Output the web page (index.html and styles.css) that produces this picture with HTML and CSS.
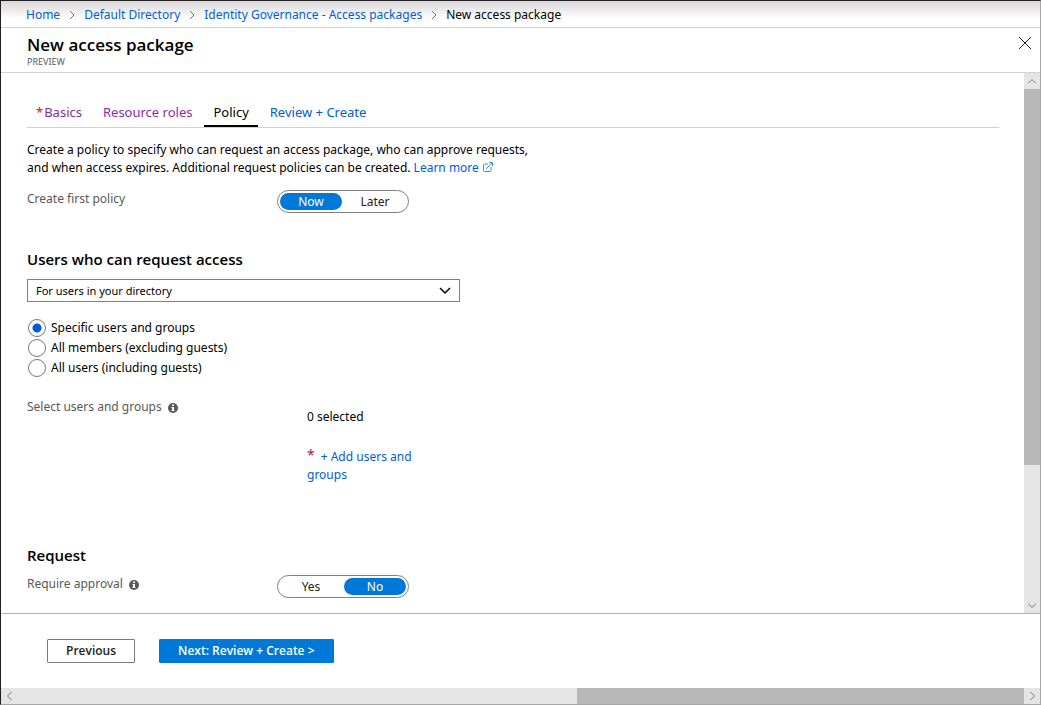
FILE: index.html
```html
<!DOCTYPE html>
<html lang="en">
<head>
<meta charset="utf-8">
<title>New access package</title>
<meta name="viewport" content="width=device-width, initial-scale=1">
<link rel="stylesheet" href="styles.css">
</head>
<body>
<div class="portal">
  <nav class="breadcrumb" aria-label="Breadcrumb">
    <a href="#">Home</a>
    <svg class="crumb-arrow" viewBox="0 0 6 10"><path d="M1 1l4 4-4 4"/></svg>
    <a href="#">Default Directory</a>
    <svg class="crumb-arrow" viewBox="0 0 6 10"><path d="M1 1l4 4-4 4"/></svg>
    <a href="#">Identity Governance - Access packages</a>
    <svg class="crumb-arrow" viewBox="0 0 6 10"><path d="M1 1l4 4-4 4"/></svg>
    <span>New access package</span>
  </nav>

  <header class="blade-header">
    <div>
      <h1 class="blade-title">New access package</h1>
      <div class="blade-tag">PREVIEW</div>
    </div>
    <button class="close" type="button" aria-label="Close">
      <svg viewBox="0 0 12 12" width="12" height="12"><path d="M0 0l12 12M12 0L0 12"/></svg>
    </button>
  </header>

  <div class="blade-body">
    <main class="content">
      <nav class="tabs" aria-label="Steps">
        <a class="tab visited" href="#"><span class="star">*</span>Basics</a>
        <a class="tab visited" href="#">Resource roles</a>
        <a class="tab active" href="#" aria-current="page">Policy</a>
        <a class="tab" href="#">Review + Create</a>
      </nav>

      <p class="intro">Create a policy to specify who can request an access package, who can approve requests,<br>and when access expires. Additional request policies can be created. <a href="#">Learn more<svg class="external" viewBox="0 0 10 10" width="10" height="10"><path d="M5 2H1.500Q.5 2 .5 3v5.500q0 1 1 1H7q1 0 1-1V5M3 7l6-6M6 .5h3.500V4"/></svg></a></p>

      <div class="row policy-row">
        <div class="label" id="first-policy">Create first policy</div>
        <div class="toggle" role="group" aria-labelledby="first-policy">
          <button class="option on" type="button" aria-pressed="true">Now</button>
          <button class="option" type="button" aria-pressed="false">Later</button>
        </div>
      </div>

      <h2 class="section-title" id="users-title">Users who can request access</h2>
      <div class="select-wrap">
        <select class="select" aria-labelledby="users-title"><option>For users in your directory</option></select>
        <svg class="select-arrow" viewBox="0 0 12 8" width="12" height="8"><path d="M1 1l5 5 5-5"/></svg>
      </div>

      <div class="radios" role="radiogroup" aria-labelledby="users-title">
        <label class="radio"><input type="radio" name="scope" checked>Specific users and groups</label>
        <label class="radio"><input type="radio" name="scope">All members (excluding guests)</label>
        <label class="radio"><input type="radio" name="scope">All users (including guests)</label>
      </div>

      <div class="row picker-row">
        <div class="label">Select users and groups<svg class="info" viewBox="0 0 10 10" width="10" height="10"><circle cx="5" cy="5" r="5"/><path d="M4 1.500h2v1.500H4zM3.500 4H6v3h.5v1h-3V7H4V5h-.5z"/></svg></div>
        <div class="picker">
          <div class="count">0 selected</div>
          <div class="add"><span class="star">*</span><a href="#">+ Add users and groups</a></div>
        </div>
      </div>

      <h2 class="section-title">Request</h2>
      <div class="row approval-row">
        <div class="label" id="approval">Require approval<svg class="info" viewBox="0 0 10 10" width="10" height="10"><circle cx="5" cy="5" r="5"/><path d="M4 1.500h2v1.500H4zM3.500 4H6v3h.5v1h-3V7H4V5h-.5z"/></svg></div>
        <div class="toggle" role="group" aria-labelledby="approval">
          <button class="option" type="button" aria-pressed="false">Yes</button>
          <button class="option on" type="button" aria-pressed="true">No</button>
        </div>
      </div>
    </main>
    <div class="scrollbar vertical" aria-hidden="true">
      <span class="scroll-end"><svg viewBox="0 0 8 5" width="8" height="5"><path d="M0 4.500l4-4 4 4"/></svg></span>
      <span class="thumb"></span>
      <span class="track"></span>
      <span class="scroll-end"><svg viewBox="0 0 8 5" width="8" height="5"><path d="M0 .5l4 4 4-4"/></svg></span>
    </div>
  </div>

  <footer class="actions">
    <button class="button" type="button">Previous</button>
    <button class="button primary" type="button">Next: Review + Create &gt;</button>
  </footer>

  <div class="scrollbar horizontal" aria-hidden="true">
    <span class="scroll-end"><svg viewBox="0 0 5 8" width="5" height="8"><path d="M4.500 0l-4 4 4 4"/></svg></span>
    <span class="track"></span>
    <span class="thumb"></span>
    <span class="scroll-end"><svg viewBox="0 0 5 8" width="5" height="8"><path d="M.5 0l4 4-4 4"/></svg></span>
  </div>
</div>
</body>
</html>
```
FILE: styles.css
```css
* { box-sizing: border-box; }

body {
  margin: 0;
  font: 12px/18px "Noto Sans", "Open Sans", sans-serif;
  color: #000;
  background: #fff;
}

a { color: #015cda; text-decoration: none; }
button { font: inherit; cursor: pointer; }
svg { fill: none; stroke: currentColor; flex: none; }

.portal {
  display: flex;
  flex-direction: column;
  height: 100vh;
  border: 1px solid #231f20;
  border-right-color: #a6a6a6;
  border-bottom-color: #a6a6a6;
}

.breadcrumb {
  display: flex;
  align-items: center;
  gap: 9px;
  flex: none;
  height: 27px;
  padding: 1px 0 0 25px;
  border-bottom: 1px solid #d2d2d2;
  background: linear-gradient(#d9d7d9, #fff 18px);
  white-space: nowrap;
}
.crumb-arrow { width: 6px; height: 10px; color: #777; }

.blade-header {
  display: flex;
  justify-content: space-between;
  align-items: flex-start;
  flex: none;
  height: 45px;
  padding: 7px 8px 0 26px;
  border-bottom: 1px solid #d2d2d2;
}
.blade-title { margin: 0; font: 600 17px/20px "Open Sans", "Noto Sans", sans-serif; }
.blade-tag { font-size: 9px; line-height: 13px; color: #595959; }
.close { display: flex; padding: 2px 1px; border: 0; background: none; color: #222; }

.blade-body { display: flex; flex: 1; min-height: 0; }
.content { flex: 1; min-width: 0; overflow: hidden; padding: 26px 25px 0 26px; }

.tabs { display: flex; gap: 3px; border-bottom: 1px solid #d2d2d2; font-size: 13px; }
.tab { padding: 4px 9px; border-bottom: 2px solid transparent; line-height: 18px; white-space: nowrap; }
.tab.visited { color: #8a2da5; }
.tab.active { color: #000; border-color: #000; }
.star { color: #e00b1c; margin-right: 1px; }

.intro { margin: 13px 0; }
.external { margin-left: 4px; color: #3999c6; }

.row { display: flex; align-items: flex-start; }
.label { flex: none; width: 250px; color: #595959; }
.info { margin-left: 6px; vertical-align: -2px; stroke: none; }
.info circle { fill: #595959; }
.info path { fill: #fff; }

.toggle {
  display: flex;
  gap: 2px;
  width: 132px;
  height: 23px;
  padding: 2px;
  border: 1px solid #808080;
  border-radius: 12px;
}
.option {
  flex: 1;
  padding: 0;
  border: 0;
  border-radius: 9px;
  background: none;
  color: #222;
  font-size: 12px;
  line-height: 17px;
}
.option.on { background: #0078d7; color: #fff; }

.section-title { margin: 0; font: 600 15px/20px "Open Sans", "Noto Sans", sans-serif; }
.policy-row { margin-bottom: 36px; }

.select-wrap { position: relative; width: 433px; max-width: 100%; margin: 10px 0 16px; }
.select {
  display: block;
  width: 100%;
  height: 23px;
  padding: 0 8px;
  appearance: none;
  border: 1px solid #808080;
  border-radius: 0;
  background: #fff;
  color: #000;
  font: 11px/20px "Noto Sans", "Open Sans", sans-serif;
}
.select-arrow { position: absolute; right: 9px; top: 8px; stroke-width: 1.5; pointer-events: none; }

.radio { display: flex; align-items: center; gap: 5px; height: 20px; padding-left: 1px; line-height: 20px; }
.radio input {
  width: 18px;
  height: 18px;
  margin: 0;
  appearance: none;
  border: 1px solid #767676;
  border-radius: 50%;
}
.radio input:checked { background: radial-gradient(circle, #015cda 4px, #fff 5px); }

.picker-row { margin: 20px 0 61px; }
.picker { width: 150px; padding: 10px 0 0 30px; }
.add { margin-top: 22px; }
.add .star { float: left; margin-right: 6px; color: #c4122f; font-size: 14px; line-height: 14px; }

.approval-row { padding-top: 10px; }

.actions {
  display: flex;
  gap: 24px;
  flex: none;
  padding: 25px 46px;
  border-top: 1px solid #b3b3b3;
}
.button {
  height: 24px;
  padding: 0 18px;
  border: 1px solid #7a7a7a;
  border-radius: 1px;
  background: #fff;
  color: #222;
  font: 600 12px/20px "Open Sans", "Noto Sans", sans-serif;
}
.button.primary { border-color: #0078d7; background: #0078d7; color: #fff; }

.scrollbar { display: flex; flex: none; background: #e5e5e5; color: #777; }
.scrollbar.vertical { flex-direction: column; width: 16px; }
.scrollbar.horizontal { height: 16px; }
.scroll-end { display: flex; align-items: center; justify-content: center; flex: none; width: 16px; height: 16px; }
.thumb { background: #b8b8b8; }
.vertical .thumb { flex: 376; }
.vertical .track { flex: 132; }
.horizontal .track { flex: 560; }
.horizontal .thumb { flex: 447; }
```
